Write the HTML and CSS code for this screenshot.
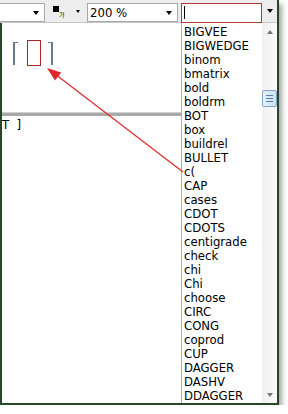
FILE: index.html
```html
<!DOCTYPE html>
<html lang="en">
<head>
<meta charset="UTF-8">
<meta name="viewport" content="width=device-width, initial-scale=1.0">
<title>Equation Editor</title>
<link rel="stylesheet" href="styles.css">
</head>
<body>

<div class="window">
  <div class="toolbar">
    <div class="combo combo-style"><span class="caret"></span></div>
    <div class="color-pick">
      <span class="swatch"></span>
      <span class="ga">가</span>
      <span class="caret small"></span>
    </div>
    <div class="combo combo-zoom"><span class="value">200 %</span><span class="caret"></span></div>
    <div class="search"><span class="cursor"></span></div>
    <div class="drop-btn"><span class="caret"></span></div>
  </div>

  <div class="content">
    <div class="formula">
      <span class="bracket left"></span>
      <span class="slot"></span>
      <span class="bracket right"></span>
    </div>
    <div class="divider"></div>
    <div class="script-line">T  ]</div>
  </div>

  <!-- command list dropped down from the search box -->
  <div class="listbox">
    <ul class="items">
      <li>BIGVEE</li>
      <li>BIGWEDGE</li>
      <li>binom</li>
      <li>bmatrix</li>
      <li>bold</li>
      <li>boldrm</li>
      <li>BOT</li>
      <li>box</li>
      <li>buildrel</li>
      <li>BULLET</li>
      <li>c(</li>
      <li>CAP</li>
      <li>cases</li>
      <li>CDOT</li>
      <li>CDOTS</li>
      <li>centigrade</li>
      <li>check</li>
      <li>chi</li>
      <li>Chi</li>
      <li>choose</li>
      <li>CIRC</li>
      <li>CONG</li>
      <li>coprod</li>
      <li>CUP</li>
      <li>DAGGER</li>
      <li>DASHV</li>
      <li>DDAGGER</li>
    </ul>
    <div class="scrollbar">
      <span class="sb-btn"><span class="sb-arrow up"></span></span>
      <span class="sb-track">
        <span class="sb-thumb"><i></i><i></i><i></i></span>
      </span>
      <span class="sb-btn"><span class="sb-arrow down"></span></span>
    </div>
  </div>

  <svg class="callout" width="279" height="405" viewBox="0 0 279 405">
    <line x1="183" y1="172" x2="55" y2="74" stroke="#e0282a" stroke-width="1.2"/>
    <polygon points="47,68 55,80.5 61.2,72.5" fill="#e0282a"/>
  </svg>
</div>

</body>
</html>
```

FILE: styles.css
```css
body {
    margin: 0;
    background: #ffffff;
    font-family: "DejaVu Sans Condensed", "DejaVu Sans", sans-serif;
    color: #000;
}

.window {
    position: relative;
    width: 279px;
    height: 405px;
    box-sizing: border-box;
    border-right: 2px solid #27462a;
    border-bottom: 2px solid #27462a;
    box-shadow: 3px 4px 5px rgba(0, 0, 0, 0.35);
    display: flex;
    flex-direction: column;
    background: #ffffff;
}

/* toolbar */
.toolbar {
    height: 22px;
    border-bottom: 1px solid #c6c6c6;
    background: #ededed;
    display: flex;
    align-items: flex-start;
}

.caret {
    width: 0;
    height: 0;
    border-top: 4px solid #000;
    border-left: 3.5px solid transparent;
    border-right: 3.5px solid transparent;
}

.caret.small {
    border-top-width: 3px;
    border-left-width: 2.5px;
    border-right-width: 2.5px;
}

.combo {
    margin-top: 3px;
    height: 19px;
    box-sizing: border-box;
    border: 1px solid #a8a8a8;
    background: #fff;
    display: flex;
    align-items: center;
    padding-right: 5px;
}

.combo-style {
    width: 45px;
    border-left: none;
    justify-content: flex-end;
}

.color-pick {
    width: 42px;
    box-sizing: border-box;
    padding-left: 8px;
    display: flex;
    align-items: flex-start;
}

.swatch {
    width: 6px;
    height: 6px;
    margin-top: 6px;
    background: #000;
}

.ga {
    font-family: "Noto Sans CJK KR", sans-serif;
    font-size: 6px;
    line-height: 6px;
    margin-top: 12px;
    margin-left: 0;
}

.color-pick .caret {
    margin-left: auto;
    margin-right: 7px;
    margin-top: 10px;
}

.combo-zoom {
    width: 91px;
    justify-content: space-between;
    padding-left: 2px;
    font-size: 13px;
}

.search {
    margin-top: 3px;
    margin-left: 3px;
    width: 81px;
    height: 20px;
    box-sizing: border-box;
    border: 1px solid #b23a3a;
    background: #fff;
    padding: 2px 0 0 2px;
}

.cursor {
    display: block;
    width: 1px;
    height: 13px;
    background: #000;
}

.drop-btn {
    width: 15px;
    height: 22px;
    display: flex;
    align-items: center;
    justify-content: center;
}

/* editing area */
.content {
    flex: 1;
    border-left: 2px solid #27462a;
    background: #fff;
}

.formula {
    display: flex;
    align-items: center;
    padding: 17px 0 0 11px;
}

.bracket {
    width: 3px;
    height: 22px;
    border-top: 1px solid #6a7888;
}

.bracket.left {
    border-left: 2px solid #6a7888;
}

.bracket.right {
    border-right: 2px solid #6a7888;
    margin-left: 7px;
}

.slot {
    width: 14px;
    height: 26px;
    box-sizing: border-box;
    border: 1px solid #b22424;
    margin-left: 9px;
}

.divider {
    margin-top: 46px;
    height: 3px;
    background: #a9a9a9;
    border-top: 1px solid #d0d0d0;
}

.script-line {
    white-space: pre;
    font-size: 13px;
    line-height: 14px;
    padding-top: 2px;
}

/* dropdown list */
.listbox {
    position: absolute;
    left: 181px;
    top: 23px;
    width: 96px;
    height: 380px;
    box-sizing: border-box;
    border-left: 1px solid #b0b0b0;
    background: #fff;
    display: flex;
    overflow: hidden;
}

.items {
    flex: 1;
    list-style: none;
    margin: 0;
    padding: 2px 0 0 2px;
    font-size: 13px;
    line-height: 14px;
}

.scrollbar {
    width: 15px;
    display: flex;
    flex-direction: column;
    background: linear-gradient(to right, #f0f0f0, #fafafa);
}

.sb-btn {
    height: 17px;
    display: flex;
    align-items: center;
    justify-content: center;
}

.sb-arrow {
    width: 0;
    height: 0;
    border-left: 3.5px solid transparent;
    border-right: 3.5px solid transparent;
}

.sb-arrow.up {
    border-bottom: 4px solid #777;
}

.sb-arrow.down {
    border-top: 4px solid #777;
}

.sb-track {
    flex: 1;
    padding-top: 50px;
}

.sb-thumb {
    display: flex;
    flex-direction: column;
    align-items: center;
    justify-content: center;
    gap: 2px;
    height: 17px;
    box-sizing: border-box;
    border: 1px solid #7fa6c8;
    border-radius: 2px;
    background: linear-gradient(to right, #e6f2fc, #c8e0f4);
}

.sb-thumb i {
    display: block;
    width: 7px;
    height: 1px;
    background: #5d7f9c;
}

.callout {
    position: absolute;
    left: 0;
    top: 0;
    pointer-events: none;
}
```
